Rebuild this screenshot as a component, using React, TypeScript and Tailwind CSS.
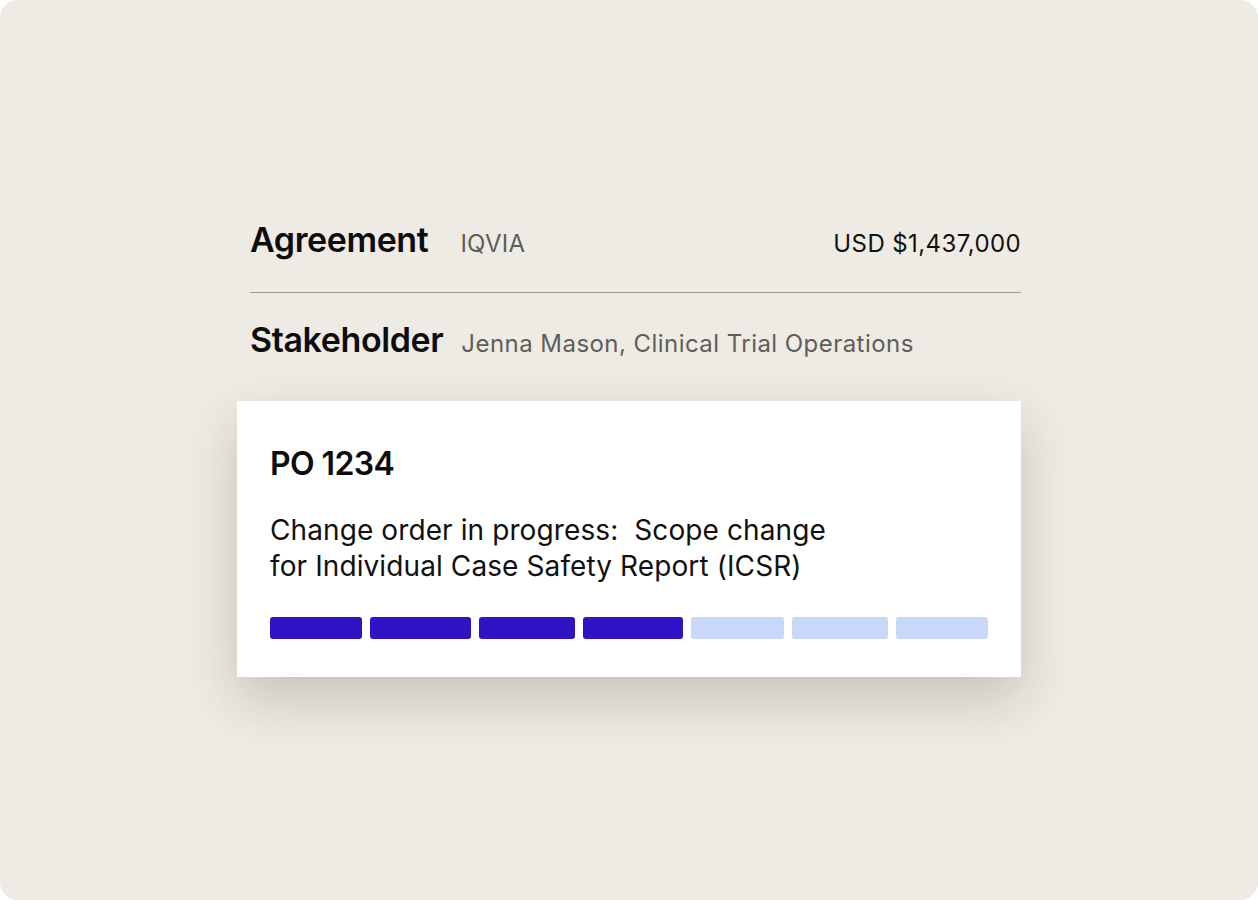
import React from 'react';

const bars = [
  { w: 'w-[92px]', on: true },
  { w: 'w-[102px]', on: true },
  { w: 'w-[96px]', on: true },
  { w: 'w-[100px]', on: true },
  { w: 'w-[93px]', on: false },
  { w: 'w-[97px]', on: false },
  { w: 'w-[92px]', on: false },
];

const App = () => {
  return (
    <div className="h-[900px] w-[1258px] bg-white font-['Inter',sans-serif]">
      <div className="h-full w-full rounded-[18px] bg-[#eeebe4] pt-[218px]">
        <div className="ml-[250px] w-[771px]">
          <div className="flex items-baseline justify-between pb-[30px]">
            <div className="flex items-baseline gap-[32px]">
              <h2 className="text-[34px] font-semibold leading-[44px] tracking-[-0.4px] text-[#0d0d0d]">Agreement</h2>
              <span className="text-[24px] tracking-[0.3px] text-[#5f5d59]">IQVIA</span>
            </div>
            <span className="text-[24px] tracking-[0.4px] text-[#111]">USD $1,437,000</span>
          </div>
          <div className="h-px bg-[#9c9a96]" />
          <div className="flex items-baseline gap-[18px] pt-[25px]">
            <h2 className="text-[34px] font-semibold leading-[44px] tracking-[-0.4px] text-[#0d0d0d]">Stakeholder</h2>
            <span className="text-[24px] tracking-[0.45px] text-[#5f5d59]">Jenna Mason, Clinical Trial Operations</span>
          </div>
        </div>
        <div className="ml-[237px] mt-[39px] w-[784px] bg-white px-[33px] pt-[43px] pb-[38px] shadow-[0_22px_50px_rgba(60,50,30,0.22)]">
          <h3 className="text-[32px] font-semibold leading-[40px] tracking-[-0.6px] text-[#0d0d0d]">PO 1234</h3>
          <p className="mt-[28px] w-[575px] text-[28px] leading-[36px] tracking-[0.1px] text-[#111]">
            Change order in progress:&nbsp; Scope change for Individual Case Safety Report (ICSR)
          </p>
          <div className="mt-[33px] flex gap-[8px]">
            {bars.map((b, i) => (
              <div
                key={i}
                className={`h-[22px] rounded-[3px] ${b.w} ${b.on ? 'bg-[#2f14c6]' : 'bg-[#c8d8f8]'}`}
              />
            ))}
          </div>
        </div>
      </div>
    </div>
  );
};

export default App;
